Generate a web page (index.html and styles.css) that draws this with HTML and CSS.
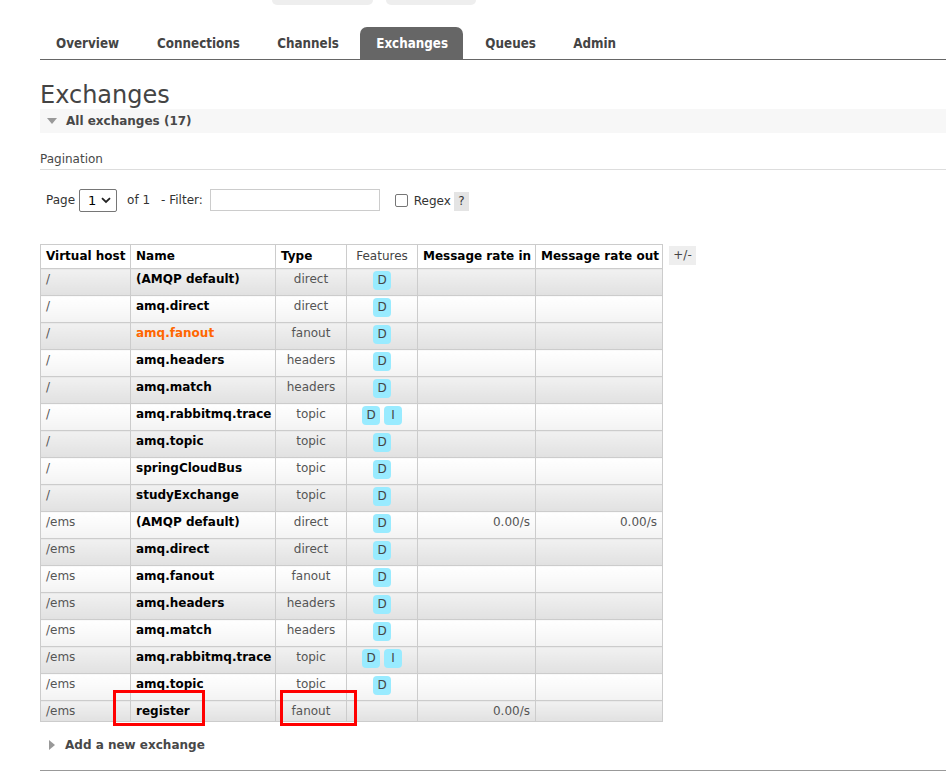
FILE: index.html
```html
<!DOCTYPE html>
<html>
<head>
<meta charset="utf-8">
<link rel="stylesheet" href="styles.css">
</head>
<body>
<div class="topbtns">
  <span class="topbtn b1"></span>
  <span class="topbtn b2"></span>
</div>
<div class="page">
  <ul class="tabs">
    <li><a>Overview</a></li>
    <li><a>Connections</a></li>
    <li><a>Channels</a></li>
    <li class="active"><a>Exchanges</a></li>
    <li><a>Queues</a></li>
    <li><a>Admin</a></li>
  </ul>
  <h1>Exchanges</h1>
  <div class="section-head"><span class="tri-down"></span>All exchanges (17)</div>
  <div class="pag-label">Pagination</div>
  <div class="filter-row">
    <span class="lbl">Page</span>
    <span class="select">1<svg width="10" height="7" viewBox="0 0 10 7"><path d="M1 1.2 L5 5 L9 1.2" fill="none" stroke="#222" stroke-width="1.8"/></svg></span>
    <span class="lbl of">of 1</span>
    <span class="lbl flt">- Filter:</span>
    <span class="input"></span>
    <span class="check"></span>
    <span class="lbl regex">Regex</span>
    <span class="help">?</span>
  </div>
  <div class="table-wrap">
    <table class="list">
      <thead>
        <tr>
          <th class="c-vh">Virtual host</th>
          <th class="c-name">Name</th>
          <th class="c-type">Type</th>
          <th class="c-feat plain">Features</th>
          <th class="c-in">Message rate in</th>
          <th class="c-out">Message rate out</th>
        </tr>
      </thead>
      <tbody>
        <tr><td class="vh">/</td><td class="nm">(AMQP default)</td><td class="tp">direct</td><td class="ft"><abbr>D</abbr></td><td class="rt"></td><td class="rt"></td></tr>
        <tr><td class="vh">/</td><td class="nm">amq.direct</td><td class="tp">direct</td><td class="ft"><abbr>D</abbr></td><td class="rt"></td><td class="rt"></td></tr>
        <tr><td class="vh">/</td><td class="nm hl">amq.fanout</td><td class="tp">fanout</td><td class="ft"><abbr>D</abbr></td><td class="rt"></td><td class="rt"></td></tr>
        <tr><td class="vh">/</td><td class="nm">amq.headers</td><td class="tp">headers</td><td class="ft"><abbr>D</abbr></td><td class="rt"></td><td class="rt"></td></tr>
        <tr><td class="vh">/</td><td class="nm">amq.match</td><td class="tp">headers</td><td class="ft"><abbr>D</abbr></td><td class="rt"></td><td class="rt"></td></tr>
        <tr><td class="vh">/</td><td class="nm">amq.rabbitmq.trace</td><td class="tp">topic</td><td class="ft"><abbr>D</abbr><abbr>I</abbr></td><td class="rt"></td><td class="rt"></td></tr>
        <tr><td class="vh">/</td><td class="nm">amq.topic</td><td class="tp">topic</td><td class="ft"><abbr>D</abbr></td><td class="rt"></td><td class="rt"></td></tr>
        <tr><td class="vh">/</td><td class="nm">springCloudBus</td><td class="tp">topic</td><td class="ft"><abbr>D</abbr></td><td class="rt"></td><td class="rt"></td></tr>
        <tr><td class="vh">/</td><td class="nm">studyExchange</td><td class="tp">topic</td><td class="ft"><abbr>D</abbr></td><td class="rt"></td><td class="rt"></td></tr>
        <tr><td class="vh">/ems</td><td class="nm">(AMQP default)</td><td class="tp">direct</td><td class="ft"><abbr>D</abbr></td><td class="rt">0.00/s</td><td class="rt">0.00/s</td></tr>
        <tr><td class="vh">/ems</td><td class="nm">amq.direct</td><td class="tp">direct</td><td class="ft"><abbr>D</abbr></td><td class="rt"></td><td class="rt"></td></tr>
        <tr><td class="vh">/ems</td><td class="nm">amq.fanout</td><td class="tp">fanout</td><td class="ft"><abbr>D</abbr></td><td class="rt"></td><td class="rt"></td></tr>
        <tr><td class="vh">/ems</td><td class="nm">amq.headers</td><td class="tp">headers</td><td class="ft"><abbr>D</abbr></td><td class="rt"></td><td class="rt"></td></tr>
        <tr><td class="vh">/ems</td><td class="nm">amq.match</td><td class="tp">headers</td><td class="ft"><abbr>D</abbr></td><td class="rt"></td><td class="rt"></td></tr>
        <tr><td class="vh">/ems</td><td class="nm">amq.rabbitmq.trace</td><td class="tp">topic</td><td class="ft"><abbr>D</abbr><abbr>I</abbr></td><td class="rt"></td><td class="rt"></td></tr>
        <tr><td class="vh">/ems</td><td class="nm">amq.topic</td><td class="tp">topic</td><td class="ft"><abbr>D</abbr></td><td class="rt"></td><td class="rt"></td></tr>
        <tr><td class="vh">/ems</td><td class="nm mark-cell">register<span class="redbox rb1"></span></td><td class="tp mark-cell">fanout<span class="redbox rb2"></span></td><td class="ft"></td><td class="rt">0.00/s</td><td class="rt"></td></tr>
      </tbody>
    </table>
    <span class="plusminus">+/-</span>
  </div>
  <div class="add-head"><span class="tri-right"></span>Add a new exchange</div>
  <div class="bottom-line"></div>
</div>
</body>
</html>
```
FILE: styles.css
```css
html, body {
  margin: 0;
  padding: 0;
  background: #fff;
}
body {
  font-family: "DejaVu Sans", Verdana, sans-serif;
  font-size: 12px;
  color: #484848;
  overflow: hidden;
}
.topbtns {
  position: absolute;
  top: 0;
  left: 0;
}
.topbtn {
  position: absolute;
  top: 0;
  height: 5px;
  background: #eee;
  border-radius: 0 0 6px 6px;
}
.topbtn.b1 { left: 272px; width: 101px; }
.topbtn.b2 { left: 386px; width: 90px; }

.page {
  padding: 27px 0 0 40px;
}
.tabs {
  list-style: none;
  margin: 0;
  padding: 0;
  display: flex;
  border-bottom: 1px solid #666;
  height: 32px;
}
.tabs li {
  margin-right: 6.25px;
}
.tabs li:first-child {
  margin-right: 7px;
}
.tabs li a {
  display: block;
  padding: 0 15px 0 16px;
  height: 32px;
  line-height: 33px;
  font-family: "DejaVu Sans Condensed", "DejaVu Sans", sans-serif;
  font-weight: bold;
  font-size: 13.3px;
  color: #444;
  border-radius: 7px 7px 0 0;
}
.tabs li.active a {
  background: #666;
  color: #fff;
}
h1 {
  margin: 21px 0 0 0;
  font-size: 24px;
  font-weight: normal;
  color: #444;
  line-height: 28px;
}
.section-head {
  background: #f7f7f7;
  height: 24px;
  line-height: 24px;
  font-weight: bold;
  font-size: 12px;
  color: #484848;
  display: flex;
  align-items: center;
}
.tri-down {
  width: 0;
  height: 0;
  border-left: 5px solid transparent;
  border-right: 5px solid transparent;
  border-top: 6px solid #999;
  margin: 0 9px 0 7px;
}
.pag-label {
  margin-top: 19px;
  padding-bottom: 3px;
  border-bottom: 1px solid #ddd;
  font-size: 12px;
  color: #484848;
  line-height: 14px;
}
.filter-row {
  margin-top: 18px;
  display: flex;
  align-items: center;
  height: 24px;
  padding-left: 6px;
  color: #333;
}
.lbl { font-size: 12px; }
.select {
  display: inline-flex;
  align-items: center;
  justify-content: space-between;
  box-sizing: border-box;
  width: 38px;
  height: 23px;
  margin-left: 4px;
  border: 1px solid #767676;
  border-radius: 2px;
  padding: 0 5px 0 8px;
  font-size: 13px;
  color: #000;
}
.of { margin-left: 10px; }
.flt { margin-left: 11px; }
.input {
  display: inline-block;
  box-sizing: border-box;
  width: 170px;
  height: 22px;
  border: 1px solid #ccc;
  margin-left: 7px;
}
.check {
  display: inline-block;
  box-sizing: border-box;
  width: 13px;
  height: 13px;
  border: 1px solid #767676;
  border-radius: 2px;
  margin-left: 15px;
}
.regex { margin-left: 6px; position: relative; top: 1px; }
.help {
  display: inline-block;
  width: 15px;
  height: 19px;
  line-height: 19px;
  text-align: center;
  background: #e4e4e4;
  margin-left: 3px;
  position: relative;
  top: 1px;
}
.table-wrap {
  margin-top: 32px;
  display: flex;
  align-items: flex-start;
}
table.list {
  border-collapse: collapse;
  table-layout: fixed;
  width: 622px;
}
.list th, .list td {
  border: 1px solid #ccc;
  padding: 3px 5px;
  line-height: 14px;
  vertical-align: top;
  text-align: left;
  white-space: nowrap;
  overflow: hidden;
}
.list th {
  padding: 4px 5px 5px;
  font-weight: bold;
  color: #000;
  background: #fff;
}
.list th.plain {
  font-weight: normal;
  color: #444;
  text-align: center;
}
.c-vh { width: 79px; }
.c-name { width: 134px; }
.c-type { width: 60px; }
.c-feat { width: 60px; }
.c-in { width: 107px; }
.c-out { width: 116px; }
.list tbody tr:nth-child(odd) td {
  background: linear-gradient(#f1f1f1, #e1e1e1);
}
.list tbody tr:nth-child(even) td {
  background: linear-gradient(#fff, #f3f3f3);
}
.list td.vh { color: #555; }
.list td.nm { font-weight: bold; color: #000; }
.list td.nm.hl { color: #ff6600; }
.list td.tp { text-align: center; color: #555; }
.list td.ft {
  text-align: center;
  padding: 2px 5px 5px;
}
.list td.rt { text-align: right; color: #555; }
abbr {
  display: inline-block;
  min-width: 18px;
  height: 19px;
  line-height: 19px;
  box-sizing: border-box;
  padding: 0 4px;
  background: #99ebff;
  border-radius: 4px;
  color: #444;
  text-decoration: none;
  font-size: 12px;
  vertical-align: top;
  margin: 0 2px;
}
.mark-cell {
  position: relative;
  overflow: visible !important;
}
.redbox {
  position: absolute;
  border: 3px solid #f00;
  box-sizing: border-box;
  pointer-events: none;
}
.rb1 { left: -18px; top: -11px; width: 92px; height: 36px; }
.rb2 { left: 4px; top: -11px; width: 77px; height: 36px; }
.plusminus {
  margin-left: 6px;
  margin-top: 2px;
  width: 27px;
  height: 19px;
  line-height: 19px;
  text-align: center;
  background: #eee;
  color: #444;
}
.add-head {
  margin-top: 16px;
  display: flex;
  align-items: center;
  height: 14px;
  font-weight: bold;
  font-size: 12px;
  color: #484848;
}
.tri-right {
  width: 0;
  height: 0;
  border-top: 5px solid transparent;
  border-bottom: 5px solid transparent;
  border-left: 6px solid #999;
  margin: 0 10px 0 9px;
}
.bottom-line {
  margin-top: 18px;
  border-top: 1px solid #999;
}
```
